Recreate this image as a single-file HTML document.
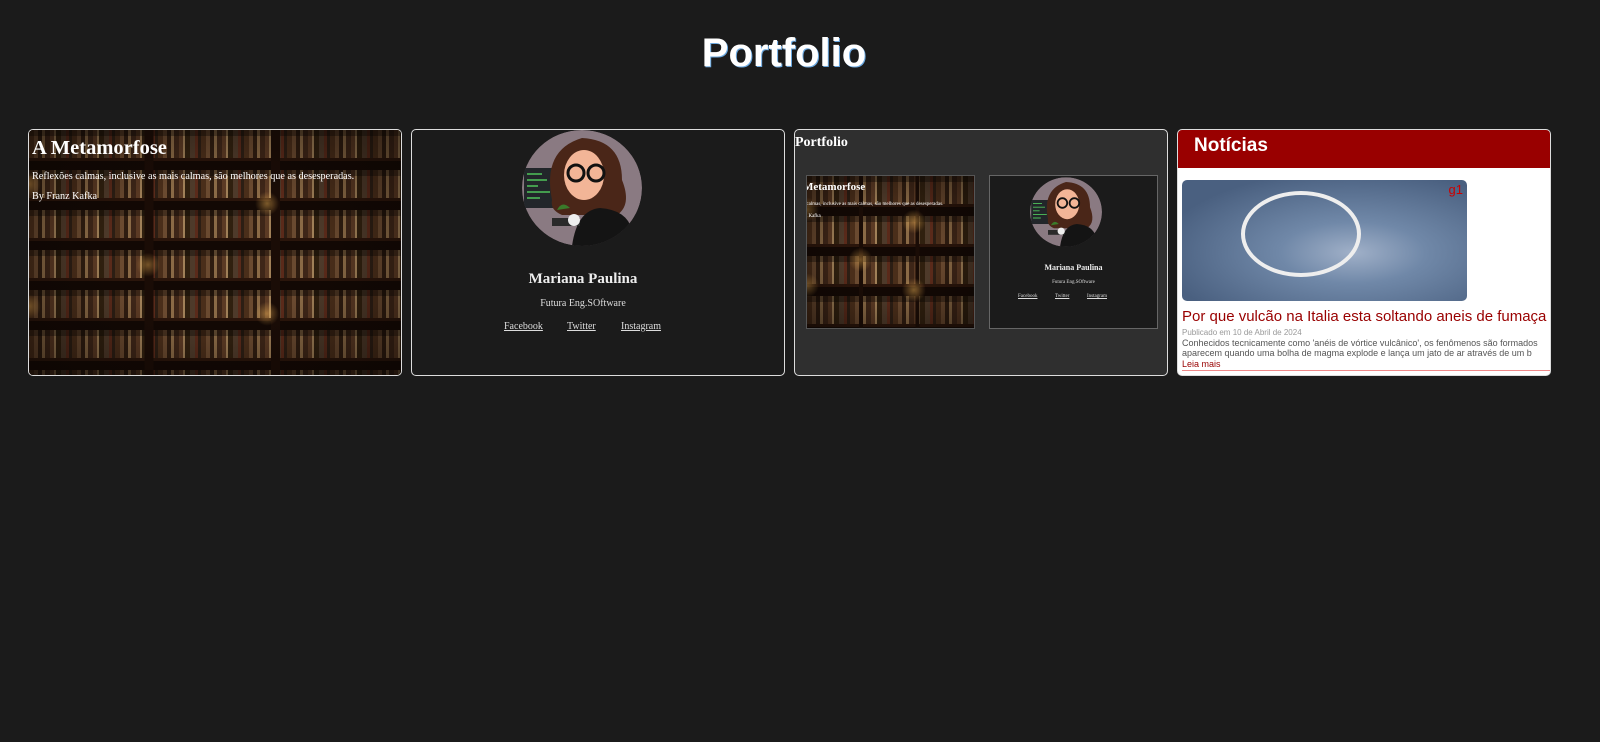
<!DOCTYPE html>
<html><head><meta charset="utf-8"><style>
*{margin:0;padding:0;box-sizing:border-box}
body{width:1600px;height:742px;background:#1b1b1b;font-family:"Liberation Serif",serif;overflow:hidden;position:relative}
h1{position:absolute;top:31px;left:0;width:1568px;text-align:center;font:bold 40px "Liberation Sans",sans-serif;color:#fff;text-shadow:1px 1px 0 #6aa8e0}
.card{position:absolute;top:129px;width:374px;height:247px;border:1px solid #ddd;border-radius:5px;overflow:hidden;background:#1b1b1b}
.shelf{position:absolute;inset:0;background:
radial-gradient(circle at 0% 22%,rgba(255,190,90,.5) 0,transparent 12px),
radial-gradient(circle at 0% 72%,rgba(255,190,90,.5) 0,transparent 12px),
radial-gradient(circle at 64% 30%,rgba(255,190,90,.45) 0,transparent 12px),
radial-gradient(circle at 64% 75%,rgba(255,190,90,.45) 0,transparent 12px),
radial-gradient(circle at 32% 55%,rgba(255,190,90,.4) 0,transparent 12px),
linear-gradient(90deg,transparent 0 31%,#1a0c06 31% 33.5%,transparent 33.5% 65%,#1a0c06 65% 67.5%,transparent 67.5%),
repeating-linear-gradient(180deg,rgba(0,0,0,.35) 0 6px,transparent 6px 28px,#2a150b 28px 31px,#120804 31px 40px),
repeating-linear-gradient(90deg,#4a2e1a 0 5px,#6a4a30 5px 9px,#2e1c10 9px 13px,#8a6a46 13px 16px,#3e2618 16px 21px,#5b3a24 21px 25px,#a08058 25px 27px,#30200f 27px 32px,#4e3a2a 32px 37px,#5a2a1a 37px 40px,#2c1e14 40px 43px);}
.shelf::after{content:"";position:absolute;inset:0;background:radial-gradient(ellipse at 50% 50%,transparent 40%,rgba(10,5,2,.55) 100%)}
.a-title{position:absolute;color:#fff;font-weight:bold;z-index:2}
.w{color:#fff;position:absolute;z-index:2}
a{color:#ddd;text-decoration:underline}
</style></head><body>
<h1>Portfolio</h1>

<div class="card" style="left:28px">
<div class="shelf"></div>
<div class="a-title" style="left:3px;top:7px;font-size:20.5px">A Metamorfose</div>
<div class="w" style="left:3px;top:41px;font-size:10.2px">Reflexões calmas, inclusive as mais calmas, são melhores que as desesperadas.</div>
<div class="w" style="left:3px;top:61px;font-size:10.2px">By Franz Kafka</div>
</div>

<svg width="0" height="0" style="position:absolute"><defs>
<g id="av">
<ellipse cx="60" cy="58" rx="60" ry="58" fill="#8a7a82"/>
<rect x="2" y="38" width="40" height="40" fill="#22262a"/>
<g stroke="#4fc45a" stroke-width="1.5"><line x1="5" y1="44" x2="20" y2="44"/><line x1="5" y1="50" x2="25" y2="50"/><line x1="5" y1="56" x2="16" y2="56"/><line x1="5" y1="62" x2="28" y2="62"/><line x1="5" y1="68" x2="18" y2="68"/></g>
<path d="M30 70 Q20 20 60 8 Q100 10 100 50 Q110 75 95 85 L40 85 Q28 80 30 70Z" fill="#4a2618"/>
<ellipse cx="62" cy="45" rx="20" ry="25" fill="#f2b597"/>
<circle cx="54" cy="43" r="8" fill="none" stroke="#111" stroke-width="3"/><circle cx="74" cy="43" r="8" fill="none" stroke="#111" stroke-width="3"/>
<path d="M50 116 Q55 80 78 78 Q105 80 110 100 L105 116Z" fill="#141414"/>
<rect x="30" y="88" width="28" height="8" fill="#2a2a2a"/>
<circle cx="52" cy="90" r="6" fill="#eee"/>
<path d="M35 80 Q40 70 48 78" fill="#3a7a2a"/>
</g>
<clipPath id="cp"><ellipse cx="60" cy="58" rx="60" ry="58"/></clipPath>
</defs></svg>

<div class="card" style="left:411px">
<svg style="position:absolute;left:110px;top:0" width="120" height="116"><g clip-path="url(#cp)"><use href="#av"/></g></svg>
<div class="w" style="left:0;width:100%;text-align:center;top:141px;font-size:15px;font-weight:bold;color:#eee;padding-right:30px">Mariana Paulina</div>
<div class="w" style="left:0;width:100%;text-align:center;top:168px;font-size:10px;color:#ddd;padding-right:30px">Futura Eng.SOftware</div>
<div class="w" style="left:92px;top:191px;font-size:10px"><a>Facebook</a></div>
<div class="w" style="left:155px;top:191px;font-size:10px"><a>Twitter</a></div>
<div class="w" style="left:209px;top:191px;font-size:10px"><a>Instagram</a></div>
</div>

<div class="card" style="left:794px;background:#2f2f2f">
<div class="w" style="left:0;top:5px;font-size:14px;font-weight:bold">Portfolio</div>
<div style="position:absolute;left:11px;top:45px;width:169px;height:154px;border:1px solid #555;overflow:hidden">
<div class="shelf"></div>
<div class="a-title" style="left:-4px;top:5px;font-size:11px">Metamorfose</div>
<div class="w" style="left:-6px;top:26px;font-size:5px;white-space:nowrap">es calmas, inclusive as mais calmas, são melhores que as desesperadas.</div>
<div class="w" style="left:-2px;top:38px;font-size:5px">z Kafka</div>
</div>
<div style="position:absolute;left:194px;top:45px;width:169px;height:154px;border:1px solid #666;background:#1b1b1b">
<svg style="position:absolute;left:40px;top:1px" width="72" height="70" viewBox="0 0 120 116"><g clip-path="url(#cp)"><use href="#av"/></g></svg>
<div class="w" style="left:0;width:100%;text-align:center;top:87px;font-size:8px;font-weight:bold;color:#eee">Mariana Paulina</div>
<div class="w" style="left:0;width:100%;text-align:center;top:104px;font-size:5px;color:#ddd">Futura Eng.SOftware</div>
<div class="w" style="left:28px;top:118px;font-size:5px"><a>Facebook</a></div>
<div class="w" style="left:65px;top:118px;font-size:5px"><a>Twitter</a></div>
<div class="w" style="left:97px;top:118px;font-size:5px"><a>Instagram</a></div>
</div>
</div>

<div class="card" style="left:1177px;background:#fff;font-family:'Liberation Sans',sans-serif">
<div style="height:38px;background:#990000;color:#fff;font-weight:bold;font-size:19px;padding:5px 0 0 16px">Notícias</div>
<div style="position:absolute;left:4px;top:50px;width:285px;height:121px;border-radius:5px;background:radial-gradient(ellipse at 60% 60%,#a0b0c8 0,#7088a8 30%,#4a6080 80%);overflow:hidden">
<div style="position:absolute;left:59px;top:11px;width:120px;height:86px;border:4px solid #eee;border-radius:50%"></div>
<div style="position:absolute;right:4px;top:2px;color:#c00;font-size:13px">g1</div>
</div>
<div style="position:absolute;left:4px;top:178px;color:#990000;font-size:15px;white-space:nowrap">Por que vulcão na Italia esta soltando aneis de fumaça</div>
<div style="position:absolute;left:4px;top:198px;color:#999;font-size:8px">Publicado em 10 de Abril de 2024</div>
<div style="position:absolute;left:4px;top:209px;color:#555;font-size:9px;white-space:nowrap;line-height:9.5px">Conhecidos tecnicamente como 'anéis de vórtice vulcânico', os fenômenos são formados<br>aparecem quando uma bolha de magma explode e lança um jato de ar através de um b</div>
<div style="position:absolute;left:4px;top:229px;color:#990000;font-size:9px">Leia mais</div>
<div style="position:absolute;left:4px;top:240px;width:370px;height:1px;background:#e88"></div>
</div>
</body></html>
